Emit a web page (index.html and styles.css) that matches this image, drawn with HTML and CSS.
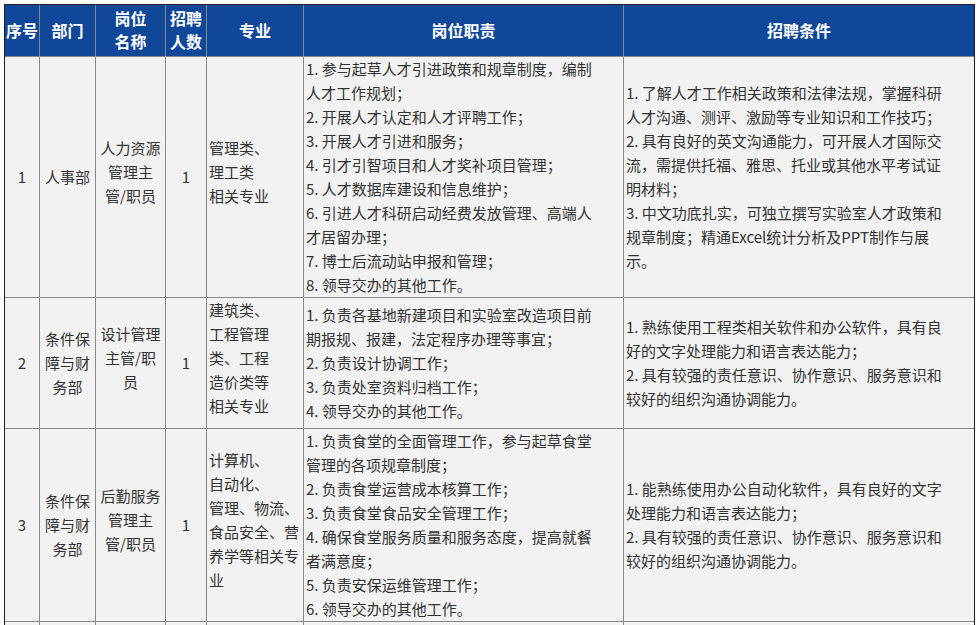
FILE: index.html
```html
<!DOCTYPE html>
<html lang="zh-CN">
<head>
<meta charset="utf-8">
<title>招聘岗位</title>
<link rel="stylesheet" href="styles.css">
</head>
<body>
<div class="table">
  <div class="cell head">序号</div>
  <div class="cell head">部门</div>
  <div class="cell head">岗位<br>名称</div>
  <div class="cell head">招聘<br>人数</div>
  <div class="cell head">专业</div>
  <div class="cell head">岗位职责</div>
  <div class="cell head last">招聘条件</div>

  <div class="cell c r1">1</div>
  <div class="cell c r1">人事部</div>
  <div class="cell c up r1">人力资源<br>管理主<br>管/职员</div>
  <div class="cell c r1">1</div>
  <div class="cell l up r1">管理类、<br>理工类<br>相关专业</div>
  <div class="cell l r1">1. 参与起草人才引进政策和规章制度，编制<br>人才工作规划；<br>2. 开展人才认定和人才评聘工作；<br>3. 开展人才引进和服务；<br>4. 引才引智项目和人才奖补项目管理；<br>5. 人才数据库建设和信息维护；<br>6. 引进人才科研启动经费发放管理、高端人<br>才居留办理；<br>7. 博士后流动站申报和管理；<br>8. 领导交办的其他工作。</div>
  <div class="cell l last r1">1. 了解人才工作相关政策和法律法规，掌握科研<br>人才沟通、测评、激励等专业知识和工作技巧；<br>2. 具有良好的英文沟通能力，可开展人才国际交<br>流，需提供托福、雅思、托业或其他水平考试证<br>明材料；<br>3. 中文功底扎实，可独立撰写实验室人才政策和<br>规章制度；精通Excel统计分析及PPT制作与展<br>示。</div>

  <div class="cell c r2">2</div>
  <div class="cell c r2">条件保<br>障与财<br>务部</div>
  <div class="cell c up r2">设计管理<br>主管/职<br>员</div>
  <div class="cell c r2">1</div>
  <div class="cell l up r2">建筑类、<br>工程管理<br>类、工程<br>造价类等<br>相关专业</div>
  <div class="cell l r2">1. 负责各基地新建项目和实验室改造项目前<br>期报规、报建，法定程序办理等事宜；<br>2. 负责设计协调工作；<br>3. 负责处室资料归档工作；<br>4. 领导交办的其他工作。</div>
  <div class="cell l last r2">1. 熟练使用工程类相关软件和办公软件，具有良<br>好的文字处理能力和语言表达能力；<br>2. 具有较强的责任意识、协作意识、服务意识和<br>较好的组织沟通协调能力。</div>

  <div class="cell c r3">3</div>
  <div class="cell c r3">条件保<br>障与财<br>务部</div>
  <div class="cell c up r3">后勤服务<br>管理主<br>管/职员</div>
  <div class="cell c r3">1</div>
  <div class="cell l up r3">计算机、<br>自动化、<br>管理、物流、<br>食品安全、营<br>养学等相关专<br>业</div>
  <div class="cell l r3">1. 负责食堂的全面管理工作，参与起草食堂<br>管理的各项规章制度；<br>2. 负责食堂运营成本核算工作；<br>3. 负责食堂食品安全管理工作；<br>4. 确保食堂服务质量和服务态度，提高就餐<br>者满意度；<br>5. 负责安保运维管理工作；<br>6. 领导交办的其他工作。</div>
  <div class="cell l last r3">1. 能熟练使用办公自动化软件，具有良好的文字<br>处理能力和语言表达能力；<br>2. 具有较强的责任意识、协作意识、服务意识和<br>较好的组织沟通协调能力。</div>

  <div class="cell r4"></div>
  <div class="cell r4"></div>
  <div class="cell r4"></div>
  <div class="cell r4"></div>
  <div class="cell r4"></div>
  <div class="cell r4"></div>
  <div class="cell last r4"></div>
</div>
</body>
</html>
```

FILE: styles.css
```css
* { box-sizing: border-box; }

html, body {
  margin: 0;
  padding: 0;
  background: #ffffff;
}

body {
  padding: 4px 0 0 4px;
  font-family: "Noto Sans CJK SC", "Microsoft YaHei", sans-serif;
}

.table {
  display: grid;
  width: 971px;
  grid-template-columns: 35px 56px 70px 41px 97px 320px 1fr;
  border: 1px solid #1e1e1e;
  border-bottom: none;
  background: #f2f2f2;
}

.cell {
  display: flex;
  flex-direction: column;
  justify-content: center;
  border-right: 1px solid #888888;
  border-bottom: 1px solid #888888;
  color: #333333;
  font-size: 15px;
  line-height: 24px;
  white-space: nowrap;
  overflow: hidden;
}

.cell.last { border-right: none; }

.head {
  height: 52px;
  background: #114799;
  color: #ffffff;
  font-weight: bold;
  font-size: 16px;
  line-height: 23px;
  align-items: center;
  text-align: center;
  padding-bottom: 1px;
}

.c {
  align-items: center;
  text-align: center;
  padding: 0 1px;
}

.l {
  align-items: flex-start;
  text-align: left;
  padding: 0 2px 0 2px;
}

.up { padding-bottom: 10px; }

.r1 { height: 241px; }
.r2 { height: 131px; }
.r3 { height: 193px; }
.r4 { height: 3px; border-bottom: none; }
```
